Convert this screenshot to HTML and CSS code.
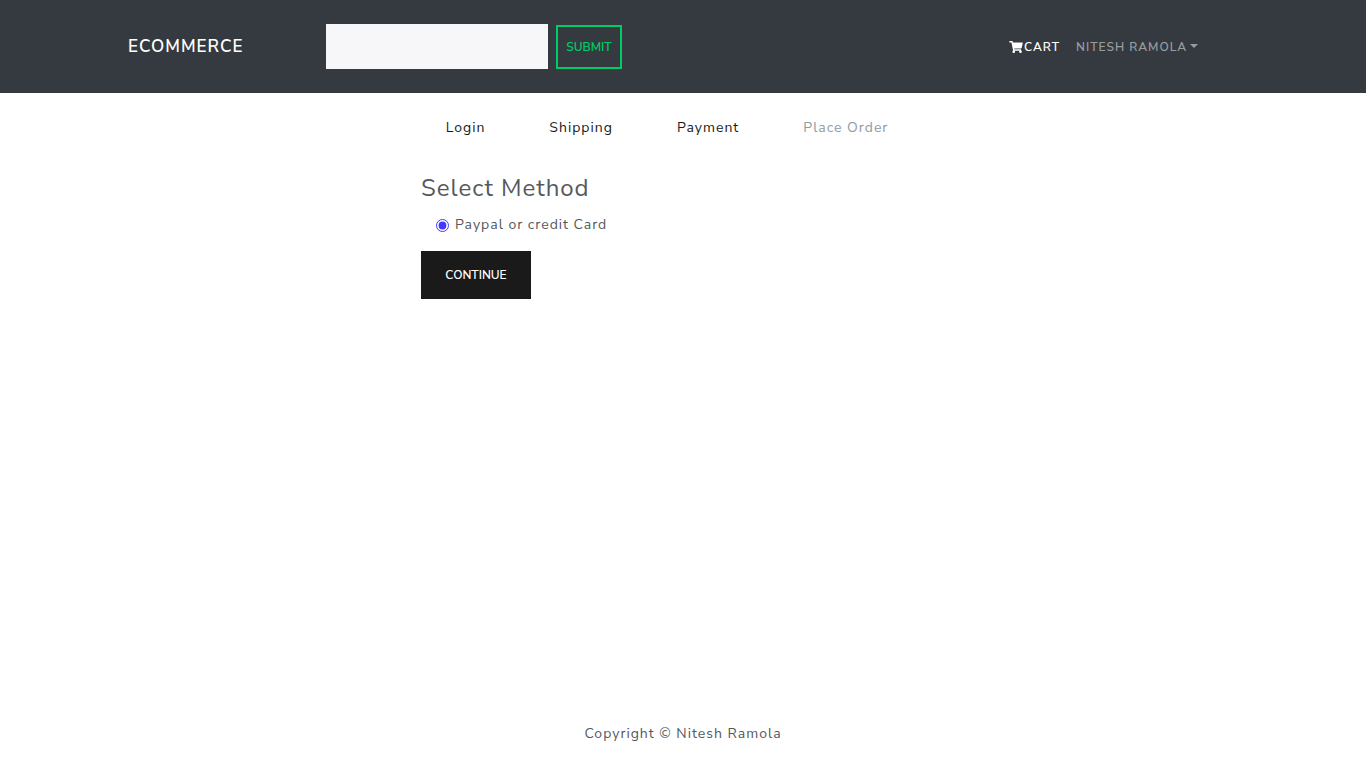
FILE: index.html
```html
<!DOCTYPE html>
<html lang="en">
<head>
  <meta charset="utf-8">
  <meta name="viewport" content="width=device-width, initial-scale=1">
  <title>Ecommerce</title>
  <link rel="stylesheet" href="styles.css">
</head>
<body>
  <header class="site-header">
    <nav class="navbar">
      <a class="brand" href="#">ECOMMERCE</a>
      <form class="search">
        <input class="search-input" type="text" aria-label="Search products">
        <button class="search-button" type="submit">SUBMIT</button>
      </form>
      <div class="nav-links">
        <a class="nav-link cart" href="#"><svg class="cart-icon" viewBox="0 0 576 512" aria-hidden="true"><path fill="currentColor" d="M528.12 301.319l47.273-208C578.806 78.301 567.391 64 551.99 64H159.208l-9.166-44.81C147.758 8.021 137.93 0 126.529 0H24C10.745 0 0 10.745 0 24v16c0 13.255 10.745 24 24 24h69.883l70.248 343.435C147.325 417.1 136 435.222 136 456c0 30.928 25.072 56 56 56s56-25.072 56-56c0-15.674-6.447-29.835-16.824-40h209.647C430.447 426.165 424 440.326 424 456c0 30.928 25.072 56 56 56s56-25.072 56-56c0-22.172-12.888-41.332-31.579-50.405l5.517-24.276c3.413-15.018-8.002-29.319-23.403-29.319H218.117l-6.545-32h293.145c11.206 0 20.92-7.754 23.403-18.681z"/></svg>CART</a>
        <button class="nav-link account" type="button">NITESH RAMOLA<span class="caret"></span></button>
      </div>
    </nav>
  </header>

  <main class="checkout">
    <nav class="steps" aria-label="Checkout steps">
      <a class="step" href="#">Login</a>
      <a class="step" href="#">Shipping</a>
      <a class="step" href="#">Payment</a>
      <a class="step disabled" aria-disabled="true" href="#">Place Order</a>
    </nav>
    <form class="payment">
      <fieldset class="methods">
        <legend class="legend">Select Method</legend>
        <label class="method"><input class="radio" type="radio" name="method" checked>Paypal or credit Card</label>
      </fieldset>
      <button class="continue" type="submit">CONTINUE</button>
    </form>
  </main>

  <footer class="site-footer">Copyright © Nitesh Ramola</footer>
</body>
</html>
```

FILE: styles.css
```css
* { box-sizing: border-box; }

body {
  display: flex;
  flex-direction: column;
  min-height: 100vh;
  margin: 0;
  background: #fff;
  color: #55595c;
  font-family: "Nunito Sans", Nunito, Lato, sans-serif;
  font-size: 14px;
  line-height: 21px;
  letter-spacing: 1px;
}

a { text-decoration: none; }

input, button { font-family: inherit; }

.site-header {
  padding: 24px 16px;
  background: #343a40;
}

.navbar {
  display: flex;
  align-items: center;
  max-width: 1110px;
  margin: 0 auto;
}

.brand {
  flex: 0 0 198px;
  color: #fff;
  font-size: 17px;
  font-weight: 600;
  line-height: 26px;
}

.search {
  display: flex;
  align-items: center;
  gap: 8px;
}

.search-input {
  width: 222px;
  height: 45px;
  padding: 8px 16px;
  border: 0;
  background: #f7f7f9;
}

.search-button {
  height: 44px;
  min-width: 66px;
  padding: 0 8px;
  border: 2px solid #0c6;
  background: transparent;
  color: #0c6;
  font-size: 12px;
  font-weight: 600;
}

.nav-links {
  display: flex;
  align-items: center;
  gap: 16px;
  margin-left: auto;
  margin-right: 40px;
}

.nav-link {
  display: flex;
  align-items: center;
  padding: 0;
  border: 0;
  background: transparent;
  font-size: 12px;
  font-weight: 600;
  line-height: 18px;
  letter-spacing: 1px;
}

.cart { color: #fff; }

.cart-icon {
  width: 14px;
  height: 12px;
  margin-right: 1px;
}

.account { color: #999c9f; }

.caret {
  margin: 0 0 2px 3px;
  border: solid transparent;
  border-width: 4px 4px 0;
  border-top-color: currentColor;
}

.checkout {
  flex: 1;
  width: 100%;
  max-width: 556px;
  margin: 0 auto;
  padding: 16px;
}

.steps {
  display: flex;
  justify-content: center;
  margin: 0 32px 24px 0;
}

.step {
  padding: 8px 32px;
  color: #1a1a1a;
  white-space: nowrap;
}

.disabled { color: #919aa1; }

.methods {
  margin: 0 0 16px;
  padding: 0;
  border: 0;
}

.legend {
  margin-bottom: 8px;
  padding: 0;
  font-size: 24px;
  line-height: 36px;
}

.method {
  display: flex;
  align-items: center;
  padding-left: 15px;
}

.radio {
  width: 13px;
  height: 13px;
  margin: 2px 6px 0 0;
  accent-color: #4338ff;
}

.continue {
  height: 48px;
  min-width: 110px;
  padding: 0 16px;
  border: 0;
  background: #1a1a1a;
  color: #fff;
  font-size: 12px;
  font-weight: 600;
}

.site-footer {
  padding: 24px;
  text-align: center;
}
```
